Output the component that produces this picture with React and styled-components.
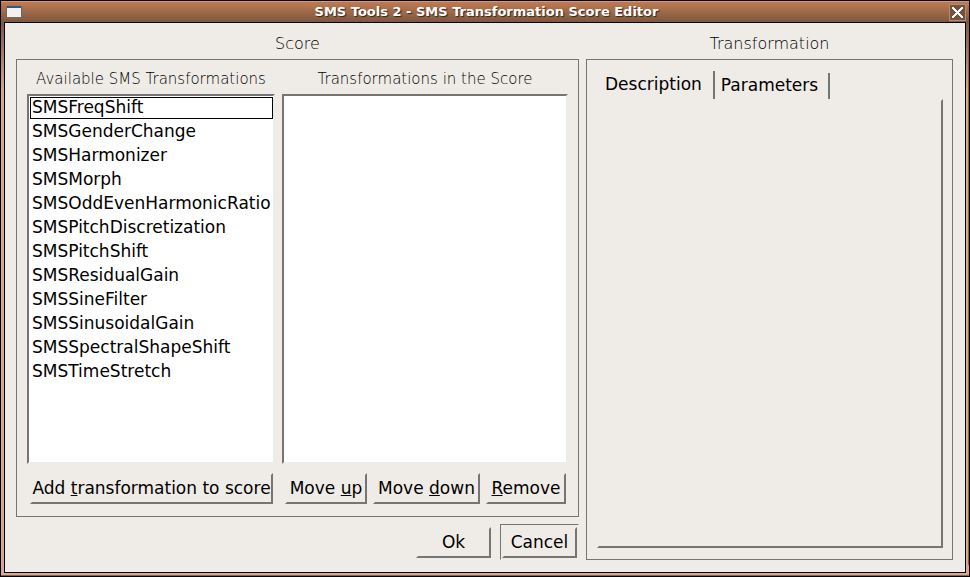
import React, { useState } from "react";
import styled, { createGlobalStyle, css } from "styled-components";

const GlobalStyle = createGlobalStyle`
  *, *::before, *::after { box-sizing: border-box; }
  body {
    margin: 0;
    background: #000;
    color: #000;
    font-family: "DejaVu Sans", sans-serif;
    font-size: 17px;
    line-height: 20px;
  }
`;

const face = "#efebe7";
const shade = "#777573";
const light = "#ececeb";

const raised = css`
  border: 2px solid;
  border-color: ${face} ${shade} ${shade} ${face};
`;

const Window = styled.main`
  display: flex;
  flex-direction: column;
  min-height: 100vh;
  border: 1px solid #000;
  padding: 0 3px 3px;
  background:
    linear-gradient(#d9a98c, #d9a98c) bottom 1px left 0 / 100% 2px no-repeat,
    linear-gradient(#8a6045, #8a6045) bottom / 100% 1px no-repeat,
    linear-gradient(90deg, transparent 2px, #8a6045 2px) right / 3px calc(100% - 22px) no-repeat,
    linear-gradient(#80583f 22px, #d9a88a 90px);
`;

const TitleBar = styled.header`
  display: grid;
  grid-template-columns: 18px 1fr 18px;
  align-items: center;
  height: 21px;
  margin: 0 -3px;
  padding: 0 2px 0 5px;
  border-top: 1px solid #dc9670;
  background: linear-gradient(#bd7b53, #7d573e);
`;

const Title = styled.h1`
  margin: 0;
  color: #fff;
  font-size: 13px;
  line-height: 18px;
  text-align: center;
  text-shadow: 1px 1px 1px #35251b;
`;

const CloseButton = styled.button`
  display: flex;
  align-items: center;
  justify-content: center;
  width: 17px;
  height: 17px;
  padding: 0;
  border: 1px solid #b68b72;
  background: #76523c;
`;

const Body = styled.div`
  flex: 1;
  display: grid;
  grid-template-columns: 563fr 367fr;
  column-gap: 7px;
  padding: 11px 12px 12px 11px;
  border: 1px solid #000;
  background: ${face};
`;

const Column = styled.section`
  display: flex;
  flex-direction: column;
  min-width: 0;
`;

const Heading = styled.h2`
  margin: 0 0 5px;
  font-size: 16px;
  line-height: 20px;
  font-weight: 200;
  text-align: center;
`;

const Panel = styled.div`
  flex: 1;
  display: flex;
  flex-direction: column;
  padding: ${(p) => p.$padding};
  border: 1px solid ${shade};
`;

const Lists = styled.div`
  flex: 1;
  display: grid;
  grid-template-columns: 248fr 286fr;
  column-gap: 7px;
`;

const ListField = styled.div`
  display: flex;
  flex-direction: column;
  min-width: 0;
`;

const ListLabel = styled.label`
  margin-bottom: 5px;
  font-size: 15px;
  line-height: 20px;
  font-weight: 200;
  text-align: center;
`;

const ListBox = styled.select`
  flex: 1;
  width: 100%;
  margin: 0;
  padding: 0;
  border: 2px solid;
  border-color: ${shade} ${light} ${light} ${shade};
  border-radius: 0;
  outline: none;
  appearance: none;
  overflow: hidden;
  background: #fff;
  color: #000;
  font: inherit;
`;

const ListItem = styled.option`
  height: 22px;
  margin: 1px 0 2px 1px;
  padding: 0 2px;
  outline: 1px solid ${(p) => (p.$current ? "#000" : "transparent")};
  outline-offset: -1px;
`;

const ScoreActions = styled.div`
  display: grid;
  grid-template-columns: 243fr 281fr;
  column-gap: 12px;
  padding: 9px 2px 0 3px;
`;

const ItemActions = styled.div`
  display: grid;
  grid-template-columns: 82fr 107fr 80fr;
  column-gap: 6px;
`;

const DialogActions = styled.div`
  display: flex;
  justify-content: flex-end;
  gap: 7px;
  padding-top: 7px;
`;

const ActionButton = styled.button`
  min-width: 0;
  height: 31px;
  padding: 0 0 2px;
  ${raised}
  background: ${face};
  color: #000;
  font: inherit;
  white-space: nowrap;
`;

const DialogButton = styled(ActionButton)`
  width: 75px;
`;

const ButtonFrame = styled.div`
  display: flex;
  padding: 2px 1px 1px;
  border: 1px solid ${face};
  ${(p) => p.$isDefault && css`
    border-top-color: ${shade};
    border-left-color: ${shade};
  `}
`;

const TabList = styled.div`
  display: flex;
  align-items: flex-end;
  height: 30px;
`;

const Tab = styled.button`
  height: ${(p) => (p.$active ? "30px" : "26px")};
  margin-bottom: ${(p) => (p.$active ? "0" : "2px")};
  padding: ${(p) => (p.$active ? "0 11px 4px 8px" : "0 10px 2px 6px")};
  border: 0;
  border-right: 2px solid ${shade};
  background: ${face};
  color: #000;
  font: inherit;
`;

const TabPane = styled.div`
  flex: 1;
  margin-top: -2px;
  ${raised}
`;

const transformations = [
  "SMSFreqShift",
  "SMSGenderChange",
  "SMSHarmonizer",
  "SMSMorph",
  "SMSOddEvenHarmonicRatio",
  "SMSPitchDiscretization",
  "SMSPitchShift",
  "SMSResidualGain",
  "SMSSineFilter",
  "SMSSinusoidalGain",
  "SMSSpectralShapeShift",
  "SMSTimeStretch",
];

const tabs = ["Description", "Parameters"];

function WindowIcon() {
  return (
    <svg width="16" height="12" viewBox="0 0 16 12" aria-hidden="true">
      <rect width="16" height="12" fill="#6e6962" />
      <rect x="1" width="14" height="2" fill="#315b83" />
      <rect x="1" y="2" width="14" height="9" fill="#f1f1f1" />
    </svg>
  );
}

function CloseIcon() {
  return (
    <svg width="11" height="11" viewBox="0 0 11 11" shapeRendering="crispEdges" aria-hidden="true">
      <path d="M0 0h2v1h1v1h1v1h1v1h1V3h1V2h1V1h1V0h2v2h-1v1H9v1H8v1H7v1h1v1h1v1h1v1h1v2H9v-1H8V9H7V8H6V7H5v1H4v1H3v1H2v1H0V9h1V8h1V7h1V6h1V5H3V4H2V3H1V2H0z" fill="#fff" />
    </svg>
  );
}

export default function App() {
  const [active, setActive] = useState("Description");
  return (
    <>
      <GlobalStyle />
      <Window>
        <TitleBar>
          <WindowIcon />
          <Title>SMS Tools 2 - SMS Transformation Score Editor</Title>
          <CloseButton aria-label="Close"><CloseIcon /></CloseButton>
        </TitleBar>
        <Body>
          <Column>
            <Heading>Score</Heading>
            <Panel $padding="9px 10px 12px">
              <Lists>
                <ListField>
                  <ListLabel htmlFor="available">Available SMS Transformations</ListLabel>
                  <ListBox id="available" size={12}>
                    {transformations.map((name, i) => (
                      <ListItem key={name} $current={i === 0}>{name}</ListItem>
                    ))}
                  </ListBox>
                </ListField>
                <ListField>
                  <ListLabel htmlFor="score">Transformations in the Score</ListLabel>
                  <ListBox id="score" size={12} />
                </ListField>
              </Lists>
              <ScoreActions>
                <ActionButton>Add <u>t</u>ransformation to score</ActionButton>
                <ItemActions>
                  <ActionButton>Move <u>u</u>p</ActionButton>
                  <ActionButton>Move <u>d</u>own</ActionButton>
                  <ActionButton><u>R</u>emove</ActionButton>
                </ItemActions>
              </ScoreActions>
            </Panel>
            <DialogActions>
              <ButtonFrame>
                <DialogButton>Ok</DialogButton>
              </ButtonFrame>
              <ButtonFrame $isDefault>
                <DialogButton>Cancel</DialogButton>
              </ButtonFrame>
            </DialogActions>
          </Column>
          <Column>
            <Heading>Transformation</Heading>
            <Panel $padding="11px 9px 11px 10px">
              <TabList role="tablist">
                {tabs.map((name) => (
                  <Tab
                    key={name}
                    id={`tab-${name}`}
                    role="tab"
                    aria-selected={active === name}
                    aria-controls="tab-pane"
                    $active={active === name}
                    onClick={() => setActive(name)}
                  >
                    {name}
                  </Tab>
                ))}
              </TabList>
              <TabPane id="tab-pane" role="tabpanel" aria-labelledby={`tab-${active}`} />
            </Panel>
          </Column>
        </Body>
      </Window>
    </>
  );
}
